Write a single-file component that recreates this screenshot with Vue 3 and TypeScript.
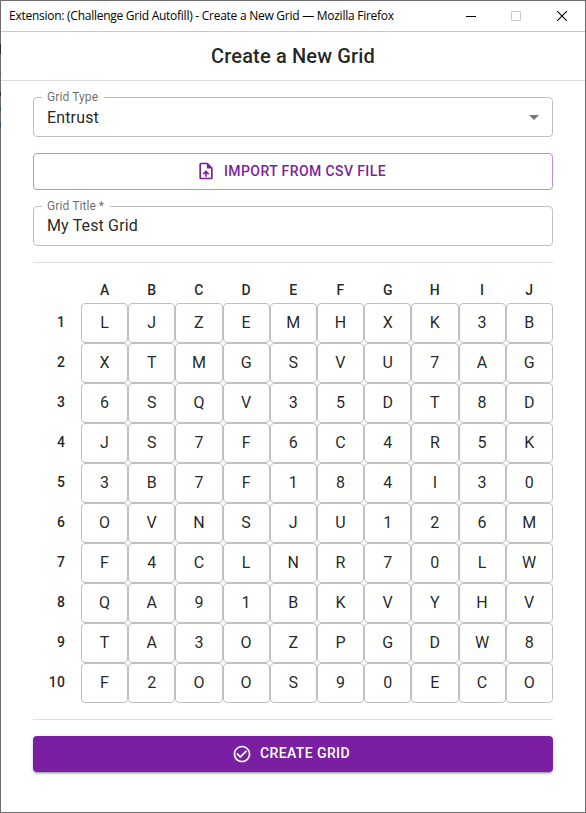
<script setup lang="ts">
const columns: string[] = [...'ABCDEFGHIJ']
const rows: string[] = [
  'LJZEMHXK3B',
  'XTMGSVU7AG',
  '6SQV35DT8D',
  'JS7F6C4R5K',
  '3B7F184I30',
  'OVNSJU126M',
  'F4CLNR70LW',
  'QA91BKVYHV',
  'TA3OZPGDW8',
  'F2OOS90ECO',
]
</script>

<template>
  <div class="window">
    <div class="titlebar">
      <span class="caption">Extension: (Challenge Grid Autofill) - Create a New Grid — Mozilla Firefox</span>
      <div class="controls">
        <svg width="10" height="10" viewBox="0 0 10 10" shape-rendering="crispEdges"><path d="M0 5.5H10" stroke="#000" /></svg>
        <svg width="10" height="10" viewBox="0 0 10 10"><path d="M.5 .5h9v9h-9z" fill="none" stroke="#ccc" /></svg>
        <svg class="close" width="10" height="10" viewBox="0 0 10 10"><path d="M0 0L10 10M10 0L0 10" fill="none" stroke="#000" stroke-width="1.1" /></svg>
      </div>
    </div>
    <header class="header"><h1>Create a New Grid</h1></header>
    <main class="content">
      <div class="field">
        <span class="label">Grid Type</span>
        <span class="value">Entrust</span>
        <svg class="arrow" width="24" height="24" viewBox="0 0 24 24"><path d="M7 10l5 5 5-5z" /></svg>
      </div>
      <button class="btn outlined">
        <svg width="20" height="20" viewBox="0 0 24 24"><path d="M14 2H6c-1.1 0-1.99.9-1.99 2L4 20c0 1.1.89 2 1.99 2H18c1.1 0 2-.9 2-2V8l-6-6zm4 18H6V4h7v5h5v11zM8 15.01l1.41 1.41L11 14.84V19h2v-4.16l1.59 1.59L16 15.01 12.01 11 8 15.01z" /></svg>
        <span>IMPORT FROM CSV FILE</span>
      </button>
      <div class="field text-field">
        <span class="label">Grid Title&#8201;*</span>
        <span class="value">My Test Grid</span>
      </div>
      <div class="divider"></div>
      <div class="grid">
        <div class="row head">
          <span></span>
          <span v-for="c in columns" :key="c" class="col-name">{{ c }}</span>
        </div>
        <div v-for="(row, i) in rows" :key="i" class="row">
          <span class="row-name">{{ i + 1 }}</span>
          <span v-for="(ch, j) in row" :key="j" class="cell">{{ ch }}</span>
        </div>
      </div>
      <div class="divider"></div>
      <button class="btn contained">
        <svg width="20" height="20" viewBox="0 0 24 24"><path d="M16.59 7.58L10 14.17l-3.59-3.58L5 12l5 5 8-8zM12 2C6.48 2 2 6.48 2 12s4.48 10 10 10 10-4.48 10-10S17.52 2 12 2zm0 18c-4.42 0-8-3.58-8-8s3.58-8 8-8 8 3.58 8 8-3.58 8-8 8z" /></svg>
        <span>CREATE GRID</span>
      </button>
    </main>
  </div>
</template>

<style>
body {
  background: #fff;
}
</style>

<style scoped>
.window {
  box-sizing: border-box;
  position: relative;
  width: 586px;
  height: 813px;
  border: 1px solid #6e6d6f;
  background: #fff;
  color: rgba(0, 0, 0, 0.87);
  font-family: Roboto, 'Liberation Sans', sans-serif;
}
/* darker marks where the translucent window edge crosses content behind it */
.window::before {
  content: '';
  position: absolute;
  left: -1px;
  top: 43px;
  width: 1px;
  height: 86px;
  background: linear-gradient(
    #2b2a2c 0 10px,
    #6e6d6f 10px 28px,
    #5a595b 28px 30px,
    #6e6d6f 30px 48px,
    #333 48px 52px,
    #6e6d6f 52px 63px,
    #3c4f75 63px 67px,
    #6e6d6f 67px 78px,
    #35516b 78px 84px,
    #6e6d6f 84px
  );
}
.titlebar {
  box-sizing: border-box;
  height: 31px;
  display: flex;
  align-items: center;
  justify-content: space-between;
  padding: 0 18px 1px 8px;
  border-bottom: 1px solid #c8c8c8;
}
.caption {
  font: 12px/16px 'Open Sans', 'Noto Sans', sans-serif;
  letter-spacing: -0.26px;
  color: #000;
  white-space: nowrap;
}
.controls {
  display: flex;
  gap: 35px;
}
.controls svg {
  display: block;
}
.controls .close {
  margin-left: 1px;
}
.header {
  box-sizing: border-box;
  height: 49px;
  display: flex;
  align-items: center;
  justify-content: center;
  border-bottom: 1px solid #dedede;
}
h1 {
  margin: 0;
  font-size: 20px;
  font-weight: 500;
  line-height: 32px;
  letter-spacing: 0.0075em;
}
.content {
  display: flex;
  flex-direction: column;
  padding: 16px 32px 0;
}
.field {
  box-sizing: border-box;
  height: 40px;
  display: flex;
  align-items: center;
  justify-content: space-between;
  padding: 0 6px 0 13px;
  position: relative;
  border: 1px solid #c0c0c0;
  border-radius: 4px;
}
.text-field {
  padding-bottom: 2px;
}
.label {
  position: absolute;
  left: 8px;
  top: -9px;
  padding: 0 6px 0 5px;
  background: #fff;
  font-size: 12px;
  line-height: 16px;
  letter-spacing: 0.00938em;
  color: rgba(0, 0, 0, 0.6);
}
.value {
  font-size: 16px;
  line-height: 23px;
  letter-spacing: 0.00938em;
}
.arrow {
  fill: rgba(0, 0, 0, 0.54);
}
.btn {
  box-sizing: border-box;
  display: flex;
  align-items: center;
  justify-content: center;
  gap: 8px;
  padding: 0 4px 0 0;
  border: 0;
  border-radius: 4px;
  font-family: inherit;
  font-size: 14px;
  font-weight: 500;
  line-height: 24px;
  letter-spacing: 0.02857em;
}
.btn svg {
  fill: currentColor;
}
.btn span {
  padding-bottom: 2px;
}
.outlined {
  height: 37px;
  margin: 16px 0;
  border: 1px solid #bd8ed0;
  background: #fff;
  color: #7b1fa2;
}
.outlined svg {
  margin-bottom: 1px;
}
.contained {
  height: 36px;
  background: #7b1fa2;
  color: #fff;
  box-shadow: 0 3px 1px -2px rgba(0, 0, 0, 0.2), 0 2px 2px 0 rgba(0, 0, 0, 0.14), 0 1px 5px 0 rgba(0, 0, 0, 0.12);
}
.divider {
  height: 1px;
  margin: 16px 0;
  background: #dfdfdf;
}
.row {
  display: grid;
  grid-template-columns: 48px repeat(10, 47.2px);
  height: 40px;
  align-items: center;
}
.head {
  height: 24px;
}
.col-name,
.row-name {
  padding-bottom: 2px;
  font-size: 14px;
  font-weight: 500;
  line-height: 22px;
  letter-spacing: 0.01071em;
  text-align: center;
}
.row-name {
  padding-right: 16px;
  text-align: right;
}
.cell {
  box-sizing: border-box;
  height: 40px;
  border: 1px solid #c0c0c0;
  border-radius: 4px;
  font-size: 16px;
  line-height: 38px;
  letter-spacing: 0.00938em;
  text-align: center;
}
</style>
